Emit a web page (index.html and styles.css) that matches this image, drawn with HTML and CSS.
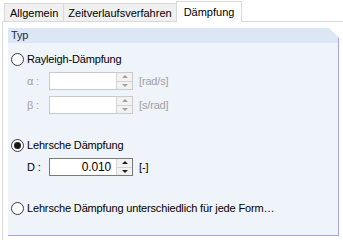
FILE: index.html
```html
<!DOCTYPE html>
<html lang="de">
<head>
    <meta charset="UTF-8">
    <title>Dämpfung</title>
    <link rel="stylesheet" href="styles.css">
</head>
<body>
    <div class="tabs">
        <div class="tab">Allgemein</div>
        <div class="tab">Zeitverlaufsverfahren</div>
        <div class="tab active">Dämpfung</div>
    </div>

    <div class="panel">
        <div class="group">
            <div class="group-title">Typ</div>
            <div class="group-body">
                <label class="radio-row">
                    <span class="radio"></span>
                    Rayleigh-Dämpfung
                </label>

                <div class="field-row disabled first">
                    <span class="field-label greek">α :</span>
                    <div class="spin-box">
                        <div class="spin-value"></div>
                        <div class="spin-buttons">
                            <span class="spin-up"></span>
                            <span class="spin-down"></span>
                        </div>
                    </div>
                    <span class="unit">[rad/s]</span>
                </div>

                <div class="field-row disabled">
                    <span class="field-label greek">β :</span>
                    <div class="spin-box">
                        <div class="spin-value"></div>
                        <div class="spin-buttons">
                            <span class="spin-up"></span>
                            <span class="spin-down"></span>
                        </div>
                    </div>
                    <span class="unit">[s/rad]</span>
                </div>

                <label class="radio-row second">
                    <span class="radio checked"></span>
                    Lehrsche Dämpfung
                </label>

                <div class="field-row first">
                    <span class="field-label">D :</span>
                    <div class="spin-box">
                        <div class="spin-value">0.010</div>
                        <div class="spin-buttons">
                            <span class="spin-up"></span>
                            <span class="spin-down"></span>
                        </div>
                    </div>
                    <span class="unit">[-]</span>
                </div>

                <label class="radio-row third">
                    <span class="radio"></span>
                    Lehrsche Dämpfung unterschiedlich für jede Form…
                </label>
            </div>
        </div>
    </div>
</body>
</html>
```

FILE: styles.css
```css
body {
    margin: 0;
    background: #ffffff;
    font-family: "Liberation Sans", Arial, sans-serif;
    font-size: 11px;
    letter-spacing: -0.16px;
    color: #000;
    overflow: hidden;
}

.tabs {
    display: flex;
    align-items: flex-end;
    height: 21px;
    padding-left: 4px;
    letter-spacing: normal;
}

.tab {
    height: 18px;
    line-height: 18px;
    padding: 0 5px;
    margin-right: -1px;
    background: #f0f0f0;
    border: 1px solid #d9d9d9;
    border-bottom: none;
    box-sizing: border-box;
}

.tab + .tab {
    padding: 0 4px;
}

.tab.active {
    position: relative;
    z-index: 1;
    height: 21px;
    line-height: 21px;
    margin-bottom: -1px;
    padding: 0 7px;
    background: #ffffff;
}

.panel {
    margin-left: 2px;
    height: 230px;
    border: 1px solid #d9d9d9;
    border-right: none;
    padding: 6px 0 0 5px;
    box-sizing: border-box;
}

.group {
    width: 331px;
    height: 208px;
    background: #eff3fa;
    border-right: 1px solid #a5a5e6;
    border-bottom: 1px solid #a5a5e6;
    box-sizing: border-box;
    clip-path: polygon(0 0, calc(100% - 10px) 0, 100% 10px, 100% 100%, 0 100%);
}

.group-title {
    height: 15px;
    line-height: 15px;
    padding-left: 3px;
    background: #dce6f4;
    color: #1b2d4d;
}

.group-body {
    display: flex;
    flex-direction: column;
    padding: 8px 0 0 3px;
}

.radio-row {
    display: flex;
    align-items: center;
    gap: 3px;
    height: 16px;
}

.radio-row.second {
    margin-top: 23px;
}

.radio-row.third {
    margin-top: 24px;
}

.radio {
    width: 13px;
    height: 13px;
    border: 1px solid #3c3c3c;
    border-radius: 50%;
    background: #ffffff;
    box-sizing: border-box;
    display: flex;
    align-items: center;
    justify-content: center;
}

.radio.checked::after {
    content: "";
    width: 7px;
    height: 7px;
    border-radius: 50%;
    background: #1a1a1a;
}

.field-row {
    display: flex;
    align-items: center;
    height: 18px;
    margin-top: 6px;
}

.field-row.first {
    margin-top: 5px;
}

.field-label {
    width: 22px;
    padding-left: 16px;
}

.disabled .field-label,
.disabled .unit {
    color: #a0a0a0;
}

.greek {
    color: #8a96b4;
}

.spin-box {
    display: flex;
    width: 84px;
    height: 18px;
    border: 1px solid #7a7a7a;
    background: #ffffff;
    box-sizing: border-box;
}

.disabled .spin-box {
    border-color: #c9c9c9;
}

.spin-value {
    flex: 1;
    text-align: right;
    padding-right: 5px;
    line-height: 16px;
    font-size: 12px;
}

.spin-buttons {
    width: 15px;
    display: flex;
    flex-direction: column;
    border-left: 1px solid #d4d4d4;
    background: #f2f2f2;
}

.spin-up,
.spin-down {
    flex: 1;
    display: flex;
    align-items: center;
    justify-content: center;
}

.spin-up {
    border-bottom: 1px solid #d4d4d4;
}

.spin-up::after {
    content: "";
    border-left: 3px solid transparent;
    border-right: 3px solid transparent;
    border-bottom: 3px solid #1a1a1a;
}

.spin-down::after {
    content: "";
    border-left: 3px solid transparent;
    border-right: 3px solid transparent;
    border-top: 3px solid #1a1a1a;
}

.disabled .spin-up::after {
    border-bottom-color: #a0a0a0;
}

.disabled .spin-down::after {
    border-top-color: #a0a0a0;
}

.unit {
    margin-left: 6px;
}
```
